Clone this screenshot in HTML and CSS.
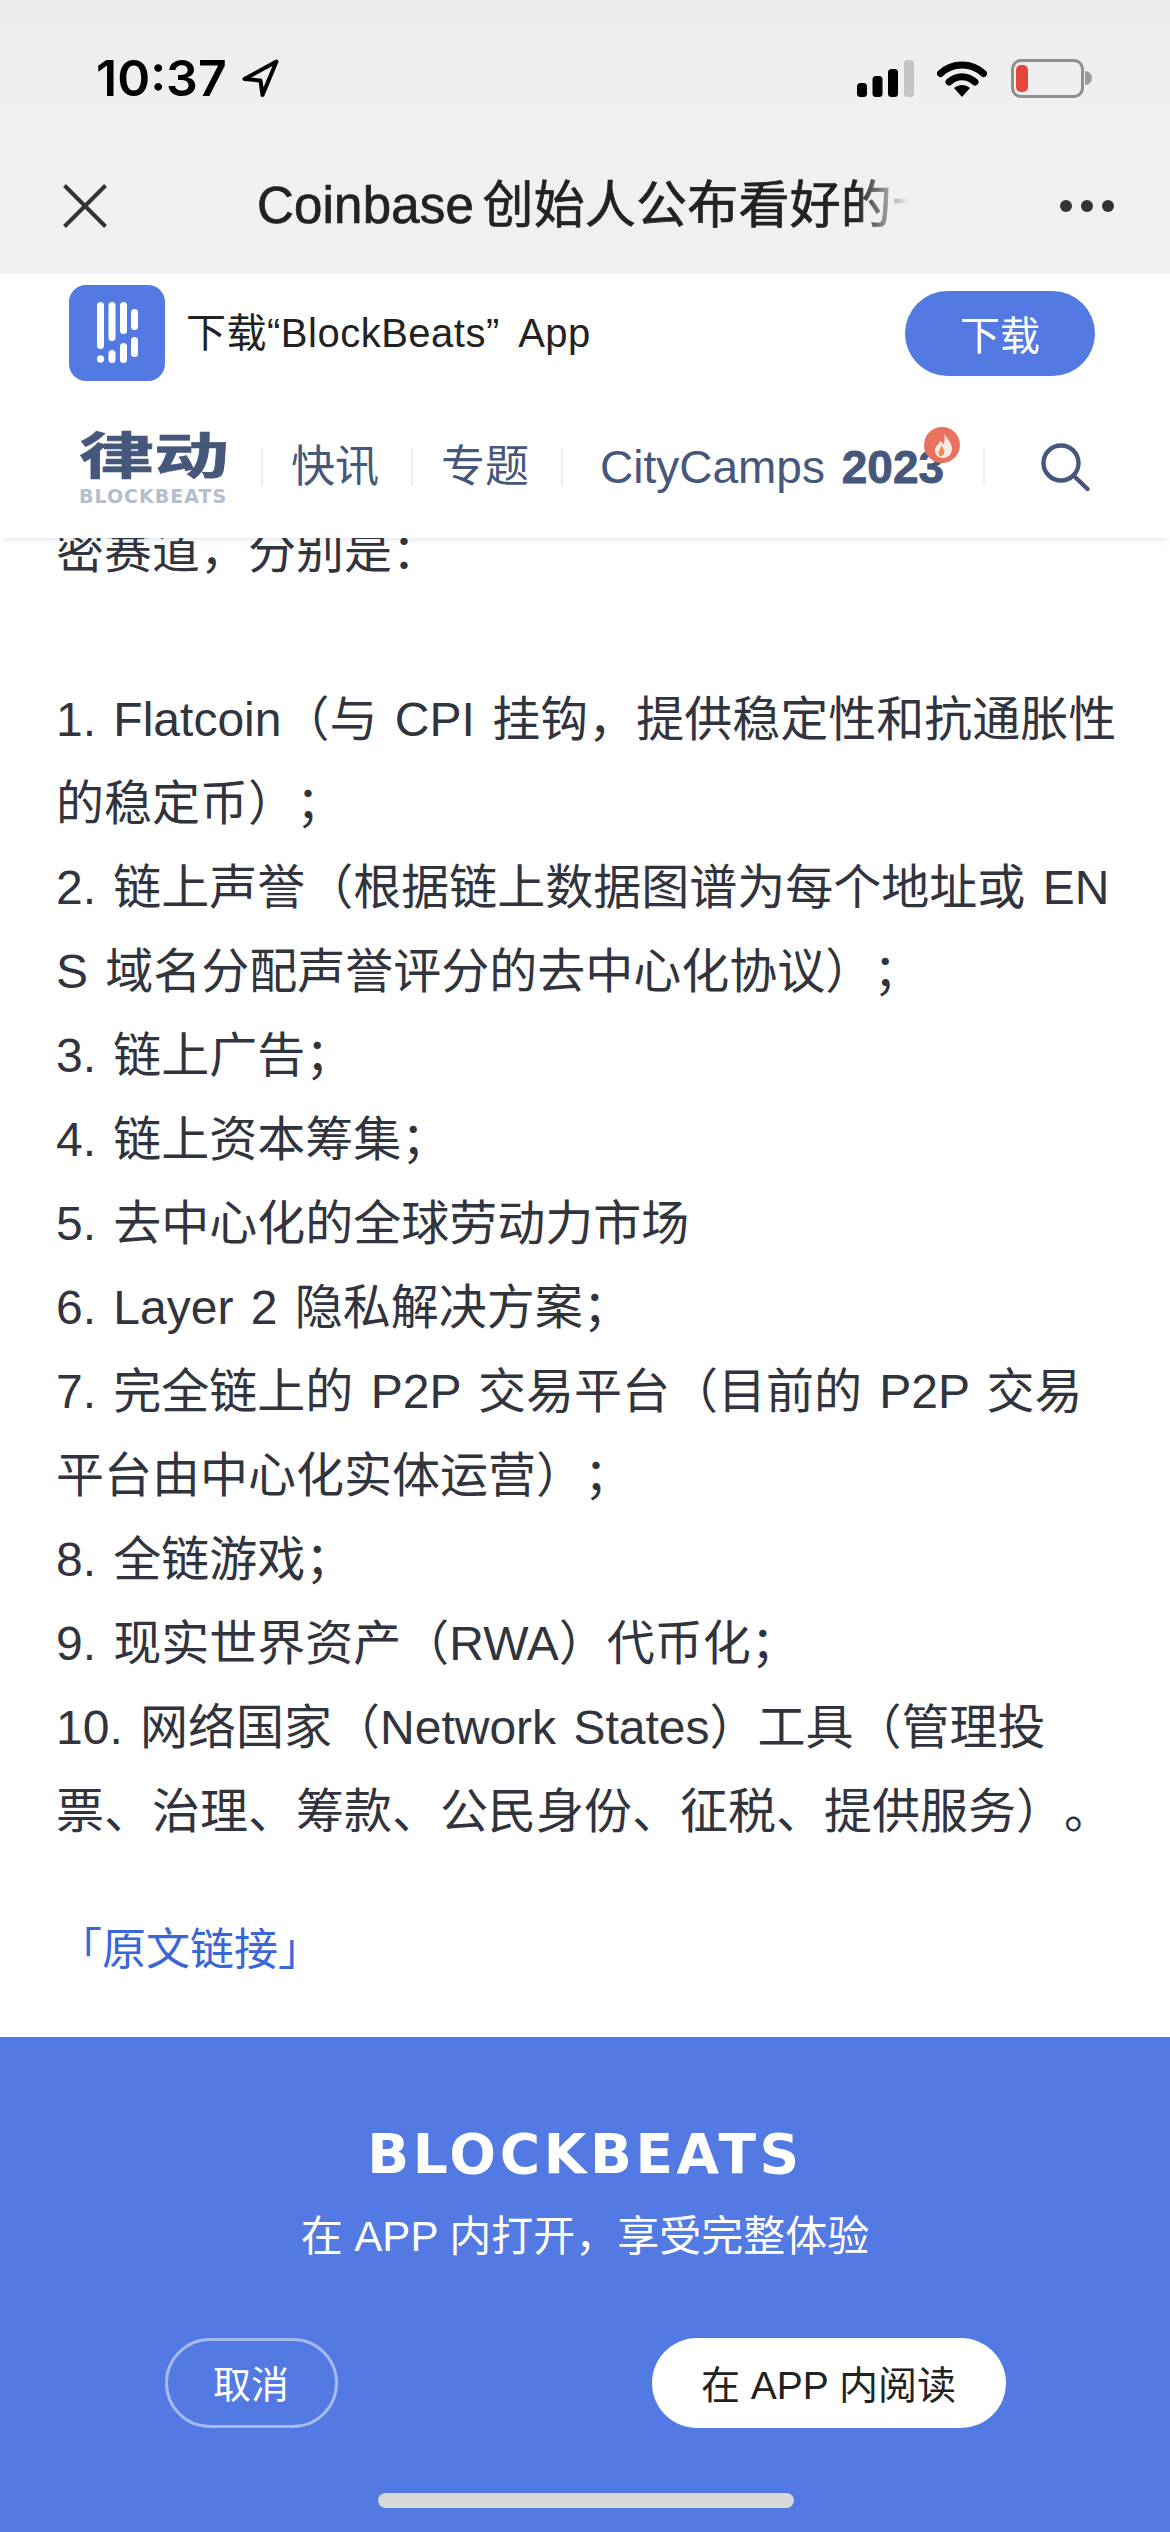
FILE: index.html
```html
<!DOCTYPE html>
<html lang="zh">
<head>
<meta charset="utf-8">
<title>Coinbase</title>
<link rel="stylesheet" href="styles.css">
</head>
<body>
<div class="phone">
  <header class="chrome">
    <div class="status">
      <div class="clock"><span>10:37</span>
        <svg class="loc" viewBox="0 0 37 38"><path d="M34.500 2.500 2.500 20l16 1.500L20.500 36z" fill="none" stroke="#000" stroke-width="4" stroke-linejoin="round"/></svg>
      </div>
      <div class="status-icons">
        <svg class="signal" viewBox="0 0 57 37"><rect x="0" y="23" width="10" height="14" rx="3.500" fill="#000"/><rect x="15.500" y="16" width="10" height="21" rx="3.500" fill="#000"/><rect x="31" y="9" width="10" height="28" rx="3.500" fill="#000"/><rect x="47" y="0" width="10" height="37" rx="3.500" fill="#c4c4c4"/></svg>
        <svg class="wifi" viewBox="0 0 50 37"><path d="M3.500 13.500C15 2 35 2 46.500 13.500" fill="none" stroke="#000" stroke-width="7" stroke-linecap="round"/><path d="M12 22c8-7 18-7 26 0" fill="none" stroke="#000" stroke-width="7" stroke-linecap="round"/><path d="M17 28c5-4 11-4 16 0l-8 9z" fill="#000"/></svg>
        <div class="battery"><i class="level"></i></div>
        <i class="nub"></i>
      </div>
    </div>
    <div class="titlebar">
      <svg class="close" viewBox="0 0 44 44"><path d="M1.500 1.500l41 41M42.500 1.500l-41 41" stroke="#333" stroke-width="4" fill="none"/></svg>
      <div class="title">Coinbase 创始人公布看好的十大加密赛道</div>
      <div class="dots"><i></i><i></i><i></i></div>
    </div>
  </header>

  <section class="download">
    <div class="app-icon">
      <svg class="app-glyph" viewBox="0 0 41 62"><g fill="#fff">
        <rect x="0" y="0" width="7" height="47" rx="3.500"/><rect x="11.500" y="0" width="7" height="39" rx="3.500"/><rect x="23" y="0" width="7" height="32" rx="3.500"/><rect x="34" y="7" width="7" height="21" rx="3.500"/>
        <circle cx="3.500" cy="57" r="3.700"/><rect x="11.500" y="48" width="7" height="13" rx="3.500"/><rect x="23" y="41" width="7" height="20" rx="3.500"/><rect x="34" y="35" width="7" height="20" rx="3.500"/>
      </g></svg>
    </div>
    <div class="download-text">下载“BlockBeats” App</div>
    <div class="download-btn">下载</div>
  </section>

  <nav class="nav">
    <div class="logo"><span class="logo-cn">律动</span><span class="logo-en">BLOCKBEATS</span></div>
    <i class="sep"></i>
    <span class="nav-item">快讯</span>
    <i class="sep"></i>
    <span class="nav-item">专题</span>
    <i class="sep"></i>
    <span class="nav-item camps">CityCamps <b>2023</b>
      <svg class="hot" viewBox="0 0 36 36"><circle cx="18" cy="18" r="18" fill="#e8715f"/><path d="M20 5c1 6 8 9 8 17 0 5-4 9-9 9s-9-4-8-9c1-4 4-4 5-8 2 1 3 2 3 4 2-3 2-8 1-13z" fill="#fbe9e3"/><path d="M17 18c2 3 4 5 3 9-1 2-4 3-5 1-2-3 2-6 2-10z" fill="#ee8a52"/></svg>
    </span>
    <i class="sep"></i>
    <svg class="search" viewBox="0 0 49 48"><circle cx="20" cy="20" r="17.500" fill="none" stroke="#46577c" stroke-width="4.400"/><path d="M33 33l13.500 13" stroke="#46577c" stroke-width="4.400" stroke-linecap="round"/></svg>
  </nav>

  <main class="article">
    <p class="clip">密赛道，分别是：</p>
    <p>&nbsp;</p>
    <p>1. Flatcoin（与 CPI 挂钩，提供稳定性和抗通胀性</p>
    <p>的稳定币）；</p>
    <p>2. 链上声誉（根据链上数据图谱为每个地址或 EN</p>
    <p>S 域名分配声誉评分的去中心化协议）；</p>
    <p>3. 链上广告；</p>
    <p>4. 链上资本筹集；</p>
    <p>5. 去中心化的全球劳动力市场</p>
    <p>6. Layer 2 隐私解决方案；</p>
    <p>7. 完全链上的 P2P 交易平台（目前的 P2P 交易</p>
    <p>平台由中心化实体运营）；</p>
    <p>8. 全链游戏；</p>
    <p>9. 现实世界资产（RWA）代币化；</p>
    <p>10. 网络国家（Network States）工具（管理投</p>
    <p>票、治理、筹款、公民身份、征税、提供服务）。</p>
    <a class="source">「原文链接」</a>
  </main>

  <footer class="promo">
    <div class="promo-logo">BLOCKBEATS</div>
    <div class="promo-text">在 APP 内打开，享受完整体验</div>
    <div class="promo-actions">
      <div class="btn-cancel">取消</div>
      <div class="btn-open">在 APP 内阅读</div>
    </div>
    <div class="home-bar"></div>
  </footer>
</div>
</body>
</html>
```
FILE: styles.css
```css
* { box-sizing: border-box; }
html, body { margin: 0; padding: 0; }
body { width: 1170px; height: 2532px; overflow: hidden; background: #fff; font-family: "Liberation Sans", "Noto Sans CJK SC", sans-serif; text-spacing-trim: space-all; }
.phone { width: 1170px; height: 2532px; display: flex; flex-direction: column; overflow: hidden; }

.chrome { height: 274px; background: linear-gradient(#ebebeb, #f0f0f0 40%); flex: none; }
.status { height: 138px; padding: 55px 78px 0 96px; display: flex; justify-content: space-between; align-items: flex-start; }
.clock { display: flex; align-items: center; gap: 15px; font-family: "Inter", sans-serif; font-size: 50px; font-weight: 600; line-height: 46px; height: 46px; color: #000; }
.loc { width: 37px; height: 38px; }
.status-icons { display: flex; align-items: center; height: 46px; }
.signal { width: 57px; height: 37px; }
.wifi { width: 50px; height: 37px; margin-left: 23px; }
.battery { width: 73px; height: 39px; margin-left: 24px; border: 3px solid #8f8f8f; border-radius: 10px; padding: 3px 2px; }
.level { display: block; width: 12px; height: 27px; background: #e8453a; border-radius: 5px; }
.nub { display: block; width: 7px; height: 14px; margin-left: 1px; background: #9a9a9a; border-radius: 0 7px 7px 0; }

.titlebar { height: 136px; padding: 0 56px 0 63px; display: flex; align-items: center; }
.close { width: 44px; height: 44px; flex: none; }
.title { width: 661px; margin-left: 150px; font-size: 51px; color: #222; white-space: nowrap; overflow: hidden; letter-spacing: 0.2px; word-spacing: -6px; line-height: 60px; -webkit-text-stroke: 0.7px #222; -webkit-mask-image: linear-gradient(to right, #000 600px, transparent 652px); mask-image: linear-gradient(to right, #000 600px, transparent 652px); }
.dots { margin-left: auto; display: flex; gap: 9px; }
.dots i { width: 12px; height: 12px; border-radius: 50%; background: #333; display: block; }

.download { height: 118px; flex: none; display: flex; align-items: center; padding: 0 75px 0 69px; background: #fff; }
.app-icon { width: 96px; height: 96px; background: #527ae2; border-radius: 17px; flex: none; display: flex; align-items: center; justify-content: center; }
.app-glyph { width: 41px; height: 62px; }
.download-text { margin-left: 21px; font-size: 40px; color: #222; letter-spacing: 0.5px; word-spacing: 9px; line-height: 50px; }
.download-btn { margin-left: auto; width: 190px; height: 85px; border-radius: 43px; background: #527ae2; color: #fff; font-size: 40px; display: flex; align-items: center; justify-content: center; }

.nav { height: 146px; flex: none; display: flex; align-items: center; padding: 4px 0 0 79px; background: #fff; box-shadow: 0 4px 6px -2px rgba(60,70,110,.12); position: relative; z-index: 2; color: #46577c; }
.logo { width: 150px; display: flex; flex-direction: column; flex: none; }
.logo-cn { display: block; font-size: 50px; line-height: 54px; font-weight: 700; color: #46577c; white-space: nowrap; transform: scaleX(1.5); transform-origin: left center; -webkit-text-stroke: 0.6px #46577c; }
.logo-en { display: block; margin-top: 3px; font-family: "DejaVu Sans", sans-serif; font-size: 19px; line-height: 18px; font-weight: 700; letter-spacing: 1px; color: #b6bdcb; white-space: nowrap; }
.sep { width: 2px; height: 37px; background: #eff0f5; display: block; flex: none; }
.logo + .sep { margin-left: 32px; }
.nav-item { font-size: 44px; line-height: 56px; color: #46577c; white-space: nowrap; margin: 0 32px 0 28px; position: relative; flex: none; }
.camps { font-size: 46px; margin: 0 39px 0 37px; word-spacing: 4px; }
.camps b { font-weight: 700; -webkit-text-stroke: 0.8px #46577c; }
.hot { position: absolute; right: -16px; top: -12px; width: 36px; height: 36px; }
.search { width: 49px; height: 48px; margin-left: 56px; flex: none; }

.article { flex: 1; min-height: 0; background: #fff; padding: 0 0 0 56px; color: #32343d; font-size: 48px; overflow: hidden; word-spacing: 4px; }
.article p { margin: 0; height: 84px; line-height: 84px; white-space: nowrap; }
.article .clip { margin-top: -28px; }
.source { display: block; margin: 54px 0 0 2px; color: #3a66d8; font-size: 44px; line-height: 84px; }

.promo { height: 495px; flex: none; background: #527ae2; display: flex; flex-direction: column; align-items: center; position: relative; color: #fff; }
.promo-logo { margin-top: 89px; height: 56px; line-height: 56px; font-family: "DejaVu Sans", sans-serif; font-size: 55px; font-weight: 700; letter-spacing: 3.600px; }
.promo-text { margin-top: 25px; font-size: 42px; line-height: 60px; }
.promo-actions { display: flex; width: 841px; justify-content: space-between; margin-top: 71px; }
.btn-cancel { width: 173px; height: 90px; border: 3px solid #a4baf0; border-radius: 45px; display: flex; align-items: center; justify-content: center; font-size: 38px; padding-bottom: 3px; }
.btn-open { width: 354px; height: 90px; border-radius: 45px; background: #fff; color: #222; display: flex; align-items: center; justify-content: center; font-size: 39px; padding-bottom: 3px; }
.home-bar { position: absolute; left: 378px; bottom: 24px; width: 416px; height: 15px; border-radius: 8px; background: #d8d8d8; }
```
